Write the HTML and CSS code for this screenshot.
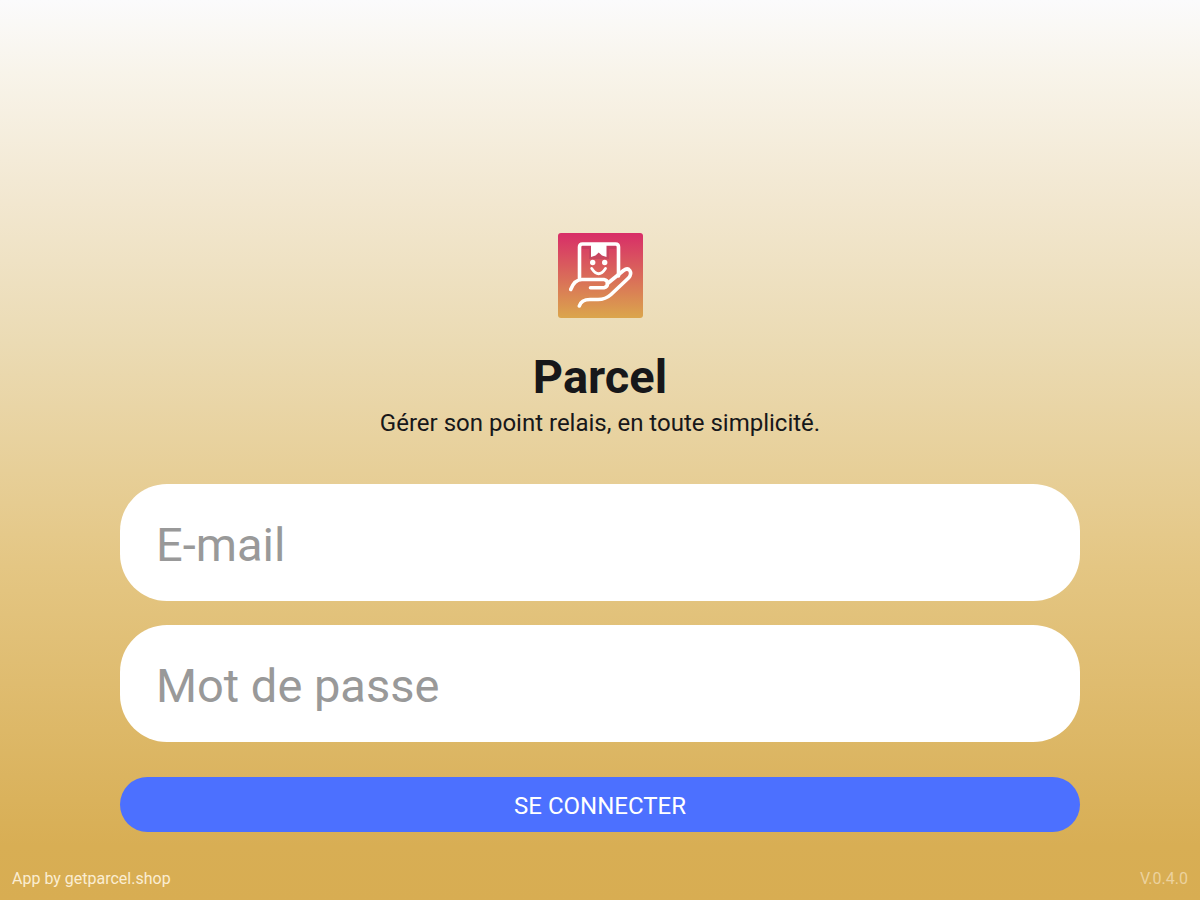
FILE: index.html
```html
<!DOCTYPE html>
<html lang="fr">
<head>
<meta charset="utf-8">
<meta name="viewport" content="width=device-width, initial-scale=1">
<title>Parcel</title>
<link rel="stylesheet" href="styles.css">
</head>
<body>
<main class="login">
  <header class="brand">
    <svg class="logo" viewBox="0 0 85 85" aria-hidden="true">
      <defs>
        <linearGradient id="logo-fill" x1="0" y1="0" x2="0" y2="1">
          <stop offset="0" stop-color="#d82d68"/>
          <stop offset="1" stop-color="#dba64c"/>
        </linearGradient>
      </defs>
      <rect width="85" height="85" rx="3" fill="url(#logo-fill)"/>
      <path d="M24 13H33V24L41 19L48 24V13H58V16H51V26H31V16H24Z" fill="#b03a5c" opacity="0.4"/>
      <g fill="none" stroke="#fff" stroke-width="3.6" stroke-linecap="round" stroke-linejoin="round">
        <path d="M21.500 45V14Q21.500 11 24.500 11H57.500Q60.500 11 60.500 14V43"/>
        <path d="M12.700 56.500C15 50.500 19 46.500 24 46.500H46Q49.500 47 49.500 50.600T46 54.700H32.500"/>
        <path d="M49.500 50.500L65.500 37.500Q69.500 34.500 71.800 37.500Q74 41 70.500 45L53 61.500Q47.500 66.500 40 66.500H32C25.500 66.500 22.500 69 21.300 73"/>
        <path d="M33.700 35.500Q40.700 46 47.500 35.500" stroke-width="2.800"/>
      </g>
      <path d="M33 11H48.500V24L44 22.500L40.700 19.500L37.500 22.500L33 24Z" fill="#fff"/>
      <circle cx="34.700" cy="29.500" r="2.700" fill="#fff"/>
      <circle cx="46.700" cy="29.500" r="2.700" fill="#fff"/>
    </svg>
    <h1 class="name">Parcel</h1>
    <p class="tagline">Gérer son point relais, en toute simplicité.</p>
  </header>
  <form class="form">
    <input class="field" type="email" name="email" placeholder="E-mail" aria-label="E-mail">
    <input class="field" type="password" name="password" placeholder="Mot de passe" aria-label="Mot de passe">
    <button class="submit" type="submit">SE CONNECTER</button>
  </form>
</main>
<footer class="footer">
  <span>App by getparcel.shop</span>
  <span class="version">V.0.4.0</span>
</footer>
</body>
</html>
```
FILE: styles.css
```css
* {
  box-sizing: border-box;
}

body {
  margin: 0;
  min-height: 100vh;
  display: flex;
  flex-direction: column;
  font-family: Roboto, "Liberation Sans", sans-serif;
  color: #17171a;
  background: linear-gradient(#fbfbfc, #f8f4ea 8%, #f3e9d4 20%, #ebdbb4 38%, #e4c683 63%, #d8ae54 94%, #d8ad52);
}

.login {
  flex: 1;
  display: flex;
  flex-direction: column;
  justify-content: flex-end;
  padding: 0 10%;
}

.brand {
  display: flex;
  flex-direction: column;
  align-items: center;
  text-align: center;
}

.logo {
  width: 85px;
  height: 85px;
}

.name {
  margin: 31px 0 0;
  font-size: 47px;
  line-height: 56px;
  font-weight: 700;
}

.tagline {
  margin: 4px 0 0;
  font-size: 24px;
  line-height: 28px;
}

.form {
  display: flex;
  flex-direction: column;
  gap: 24px;
  margin-top: 47px;
}

.field {
  width: 100%;
  height: 117px;
  padding: 4px 36px 0;
  border: 0;
  border-radius: 47px;
  background: #fff;
  color: #17171a;
  font: inherit;
  font-size: 47px;
}

.field::placeholder {
  color: #999;
  opacity: 1;
}

.submit {
  height: 55px;
  margin-top: 11px;
  padding: 2px 24px 0;
  border: 0;
  border-radius: 28px;
  background: #4c70ff;
  color: #fff;
  font: inherit;
  font-size: 24px;
}

.footer {
  display: flex;
  justify-content: space-between;
  padding: 37px 12px 11px;
  font-size: 16px;
  line-height: 20px;
  color: #fbedd2;
}

.version {
  color: #ecd29e;
}
```
